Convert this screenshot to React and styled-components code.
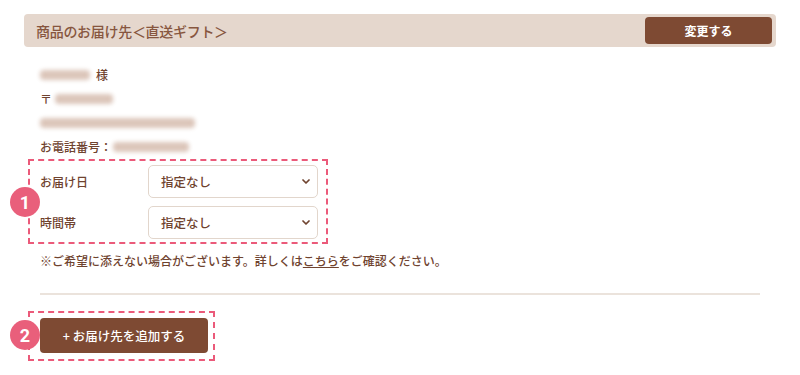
import React from "react";
import styled, { createGlobalStyle } from "styled-components";

const Global = createGlobalStyle`
  html, body { margin: 0; padding: 0; background: #fff; }
  body { font-family: "Noto Sans CJK JP", "Noto Sans", sans-serif; color: #6f432f; }
  * { box-sizing: border-box; }
`;

const Page = styled.div`
  padding: 14px 24px 0 24px;
  width: 800px;
`;

const Header = styled.div`
  height: 33px;
  background: #e5d7cd;
  border-radius: 4px;
  display: flex;
  align-items: center;
  justify-content: space-between;
  padding: 0 4px 0 12px;
`;

const HeaderTitle = styled.h2`
  margin: 0;
  font-size: 14px;
  font-weight: 500;
  color: #87563f;
  letter-spacing: -0.3px;
`;

const BrownButton = styled.button`
  background: #7e4a33;
  color: #fff;
  border: none;
  border-radius: 4px;
  font-family: inherit;
  font-weight: ${(p) => p.$weight || 700};
  font-size: ${(p) => p.$size || 12}px;
  width: ${(p) => p.$w}px;
  height: ${(p) => p.$h}px;
  display: flex;
  align-items: center;
  justify-content: center;
  padding: 0;
`;

const Body = styled.div`
  padding: 16px 16px 0 16px;
`;

const InfoLine = styled.div`
  font-size: 12px;
  font-weight: 500;
  line-height: 24px;
  height: 24px;
  display: flex;
  align-items: center;
  color: #6f432f;
`;

const Blur = styled.span`
  display: inline-block;
  width: ${(p) => p.$w}px;
  height: 10px;
  background: #dcc6ba;
  border-radius: 4px;
  filter: blur(2.2px);
  margin-left: ${(p) => p.$ml || 0}px;
  margin-right: ${(p) => p.$mr || 0}px;
`;

const Annotated = styled.div`
  position: relative;
  border: 2px dashed #eb5a7a;
  margin-left: -12px;
  width: ${(p) => p.$w}px;
  padding: ${(p) => p.$pad};
`;

const Badge = styled.span`
  position: absolute;
  left: -20px;
  top: ${(p) => p.$top}px;
  width: 30px;
  height: 30px;
  border-radius: 50%;
  background: #e95f7b;
  color: #fff;
  font-family: "Roboto", "Noto Sans", sans-serif;
  font-weight: 700;
  font-size: 18px;
  display: flex;
  align-items: center;
  justify-content: center;
`;

const FieldRow = styled.div`
  display: flex;
  align-items: center;
  height: 33px;
  & + & { margin-top: 8px; }
`;

const FieldLabel = styled.label`
  width: 108px;
  font-size: 12px;
  font-weight: 500;
  color: #6f432f;
`;

const SelectBox = styled.div`
  width: 170px;
  height: 33px;
  border: 1px solid #e2d6cc;
  border-radius: 5px;
  display: flex;
  align-items: center;
  justify-content: space-between;
  padding: 0 7px 0 12px;
  font-size: 12.5px;
  font-weight: 500;
  color: #6f432f;
  background: #fff;
`;

const Note = styled.p`
  margin: 7px 0 0 0;
  font-size: 12px;
  font-weight: 500;
  line-height: 20px;
  color: #6f432f;
`;

const Link = styled.a`
  color: inherit;
  text-decoration: underline;
`;

const Divider = styled.hr`
  border: none;
  height: 2px;
  background: #ebe3dc;
  margin: 22px 0 16px 0;
`;

const Chevron = () => (
  <svg width="8" height="5" viewBox="0 0 8 5">
    <path d="M1 1 L4 4 L7 1" fill="none" stroke="#6f432f" strokeWidth="1.7" strokeLinecap="round" strokeLinejoin="round" />
  </svg>
);

export default function App() {
  return (
    <>
      <Global />
      <Page>
        <Header>
          <HeaderTitle>商品のお届け先＜直送ギフト＞</HeaderTitle>
          <BrownButton $w={127} $h={27}>変更する</BrownButton>
        </Header>
        <Body>
          <InfoLine><Blur $w={50} $mr={6} />様</InfoLine>
          <InfoLine>〒<Blur $w={58} $ml={3} /></InfoLine>
          <InfoLine><Blur $w={155} /></InfoLine>
          <InfoLine>お電話番号：<Blur $w={76} $ml={1} /></InfoLine>
          <Annotated $w={300} $pad="4px 8px 3px 10px">
            <Badge $top={26}>1</Badge>
            <FieldRow>
              <FieldLabel>お届け日</FieldLabel>
              <SelectBox>指定なし<Chevron /></SelectBox>
            </FieldRow>
            <FieldRow>
              <FieldLabel>時間帯</FieldLabel>
              <SelectBox>指定なし<Chevron /></SelectBox>
            </FieldRow>
          </Annotated>
          <Note>※ご希望に添えない場合がございます。詳しくは<Link>こちら</Link>をご確認ください。</Note>
          <Divider />
          <Annotated $w={187} $pad="5px 5px 6px 10px">
            <Badge $top={7}>2</Badge>
            <BrownButton $w={168} $h={35} $size={12.5} $weight={500}>+ お届け先を追加する</BrownButton>
          </Annotated>
        </Body>
      </Page>
    </>
  );
}
